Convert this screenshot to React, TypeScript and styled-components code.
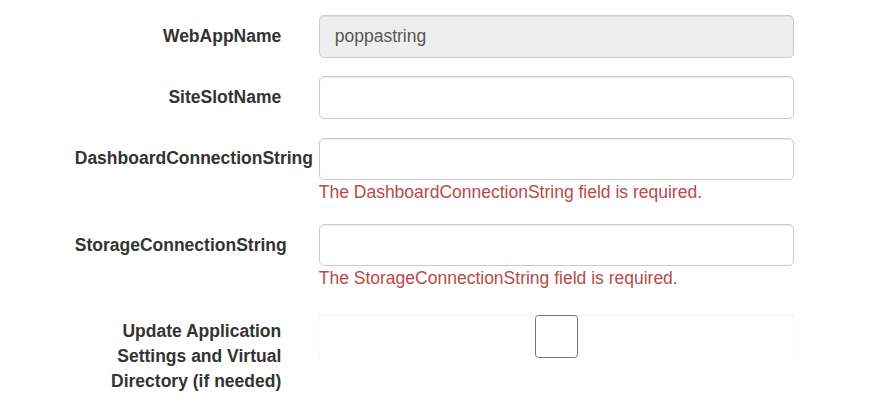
import React from "react";
import styled, {createGlobalStyle} from "styled-components";

const GlobalStyle = createGlobalStyle`
  html, body {
    margin: 0;
    padding: 0;
    background: #fff;
  }
  body {
    font-family: "Liberation Sans", Arial, Helvetica, sans-serif;
    font-size: 17.5px;
    line-height: 25px;
    color: #333;
  }
  * {
    box-sizing: border-box;
  }
`;

type Field = {
  label: string
  value?: string
  disabled?: boolean
  error?: string
}

const fields: Field[] = [
  {label: "WebAppName", value: "poppastring", disabled: true},
  {label: "SiteSlotName"},
  {label: "DashboardConnectionString", error: "The DashboardConnectionString field is required."},
  {label: "StorageConnectionString", error: "The StorageConnectionString field is required."},
];

export default function App() {
  return <Form>
    <GlobalStyle />
    {fields.map(f =>
      <Group key={f.label}>
        <Label>{f.label}</Label>
        <Control>
          <Input defaultValue={f.value ?? ""} disabled={f.disabled} readOnly={f.disabled} />
          {f.error && <Error>{f.error}</Error>}
        </Control>
      </Group>
    )}
    <Group>
      <Label>Update Application Settings and Virtual Directory (if needed)</Label>
      <Control>
        <CheckField>
          <CheckBox />
        </CheckField>
      </Control>
    </Group>
  </Form>;
}

const Form = styled.form`
  padding: 15px 0 0 56px;
  width: 891px;
`;

const Group = styled.div`
  display: grid;
  grid-template-columns: 244px 513px;
  margin-bottom: 18.75px;
`;

const Label = styled.label`
  display: block;
  padding: 8.75px 18.75px 0;
  text-align: right;
  font-weight: bold;
  color: #333;
  white-space: normal;
`;

const Control = styled.div`
  padding: 0 18.75px;
  display: flex;
  flex-direction: column;
`;

const Input = styled.input`
  display: block;
  width: 100%;
  height: 42.5px;
  padding: 7.5px 15px;
  font-family: "Liberation Sans", Arial, Helvetica, sans-serif;
  font-size: 17.5px;
  line-height: 25px;
  color: #555;
  background: #fff;
  border: 1.25px solid #ccc;
  border-radius: 5px;
  box-shadow: inset 0 1px 1px rgba(0,0,0,.075);
  outline: none;

  &:disabled {
    background: #eee;
    color: #555;
    opacity: 1;
  }
`;

const Error = styled.span`
  color: #b94a48;
  line-height: 25px;
`;

const CheckField = styled.div`
  margin-top: 5px;
  height: 43px;
  display: flex;
  justify-content: center;
  border-top: 1.25px solid #efefef;
  border-left: 1px solid #fafafa;
  border-right: 1px solid #f6f6f6;
`;

const CheckBox = styled.div`
  width: 43px;
  height: 43px;
  margin-top: -1.25px;
  border: 1.5px solid #767676;
  border-radius: 3.5px;
  background: #fff;
`;
